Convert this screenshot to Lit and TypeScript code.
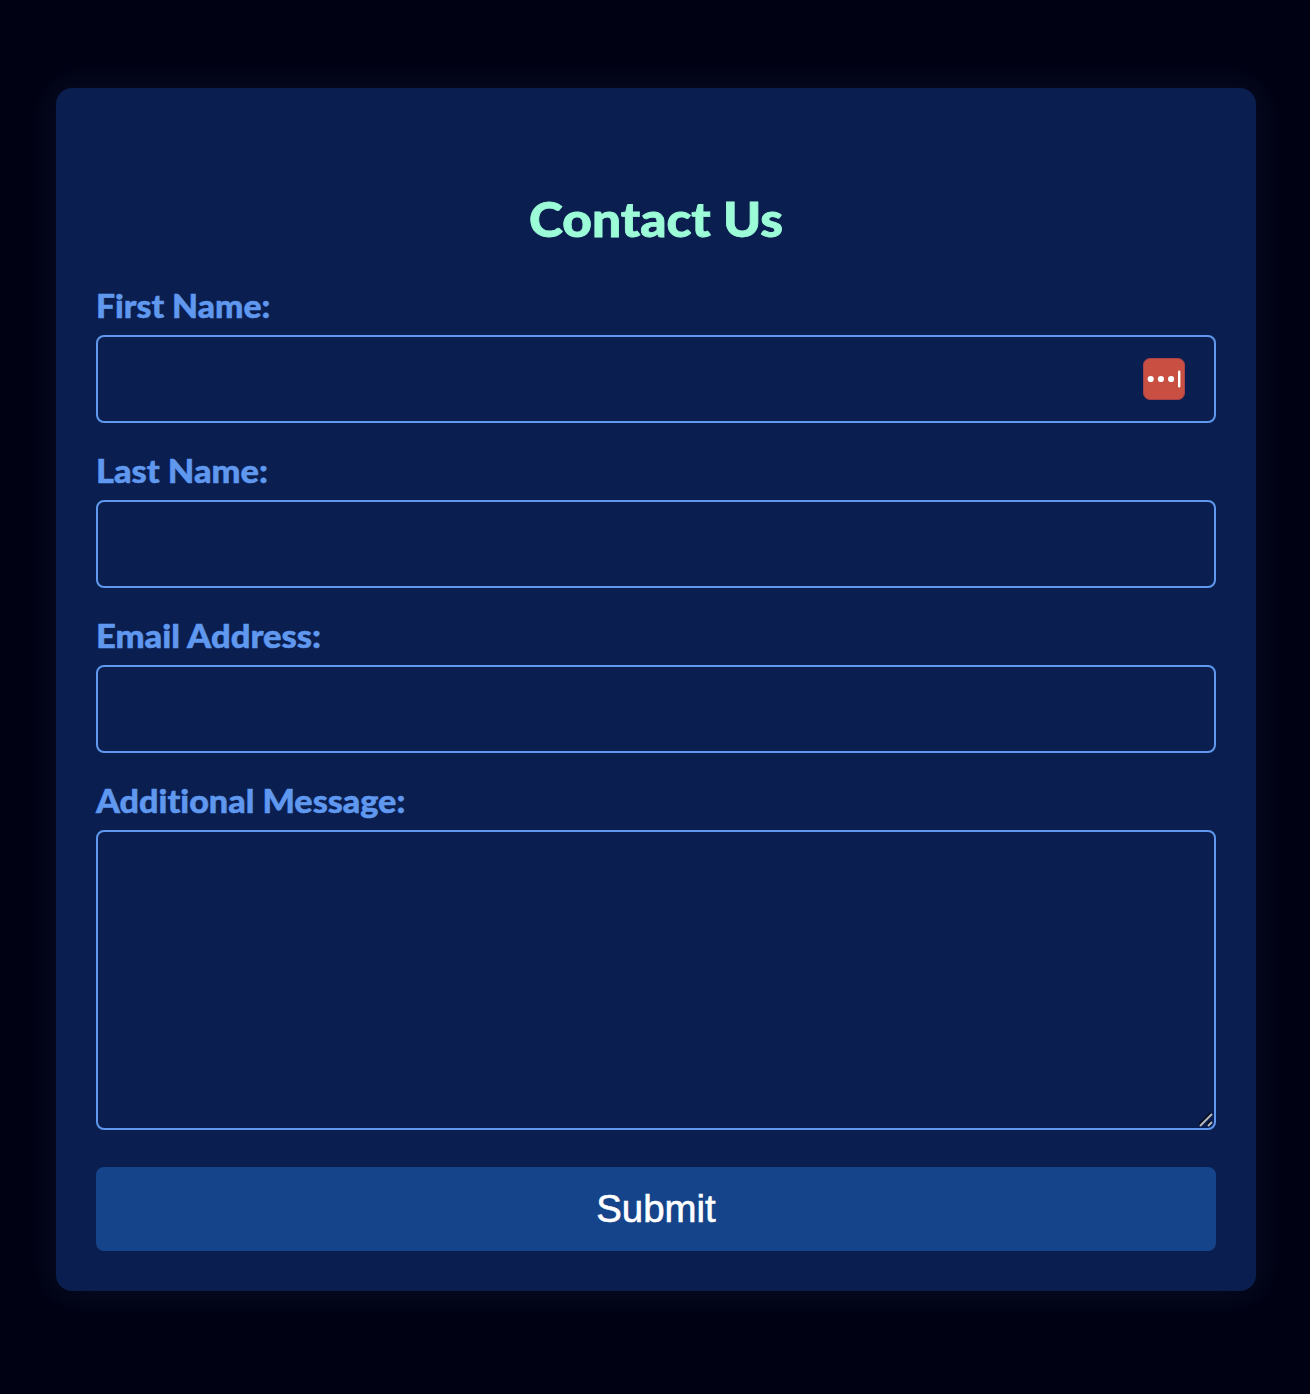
import { LitElement, html, css } from "lit";
import { customElement } from "lit/decorators.js";

@customElement("app-root")
export class AppRoot extends LitElement {
  static styles = css`
    :host {
      display: block;
      box-sizing: border-box;
      min-height: 1394px;
      padding: 88px 54px 103px 56px;
      background: #000214;
    }
    * { box-sizing: border-box; }
    .card {
      height: 1203px;
      padding: 95px 40px 40px;
      display: flex;
      flex-direction: column;
      background: #0a1f4f;
      border-radius: 16px;
      box-shadow: 0 0 34px rgba(100, 150, 200, 0.11);
    }
    h2 {
      margin: 0 0 28px;
      height: 72px;
      text-align: center;
      font: 900 48px/72px Lato, sans-serif;
      transform: scaleX(1.07);
      -webkit-text-stroke: 0.8px currentColor;
      color: #9dfcd8;
    }
    label {
      height: 45px;
      margin: 25px 0 7px;
      white-space: nowrap;
      align-self: flex-start;
      font: 900 32px/45px Lato, sans-serif;
      font-variant-ligatures: none;
      transform-origin: left;
      -webkit-text-stroke: 0.5px currentColor;
      color: #5f98ee;
    }
    .first { margin-top: 0; transform: scaleX(1.053); }
    .last { transform: scaleX(1.073); }
    .email { transform: scaleX(1.079); }
    .message { transform: scaleX(1.066); }
    .field { display: grid; height: 88px; flex: none; align-items: center; }
    input, textarea {
      display: block;
      width: 100%;
      height: 88px;
      margin: 0;
      padding: 20px;
      flex: none;
      border: 2px solid #5f98ee;
      border-radius: 8px;
      background: transparent;
      color: #fff;
      font: 32px "Liberation Sans", sans-serif;
      outline: none;
      grid-area: 1 / 1;
    }
    textarea { height: 300px; resize: none; }
    .area { display: grid; height: 300px; flex: none; }
    .grip { grid-area: 1 / 1; place-self: end; margin: 0 2px 2px 0; }
    .key { grid-area: 1 / 1; justify-self: end; margin-right: 31px; }
    svg { display: block; }
    button {
      height: 84px;
      flex: none;
      margin: 37px 0 0;
      padding: 0;
      border: 0;
      border-radius: 8px;
      background: #15448b;
      color: #fff;
      font: 38.4px/84px "Liberation Sans", sans-serif;
      -webkit-text-stroke: 0.6px currentColor;
    }
  `;

  render() {
    return html`
      <form class="card" @submit=${(e: Event) => e.preventDefault()}>
        <h2>Contact Us</h2>
        <label class="first" for="first">First Name:</label>
        <div class="field">
          <input id="first" type="text" />
          <svg class="key" width="42" height="42" viewBox="0 0 42 42">
            <rect x=".5" y=".5" width="41" height="41" rx="6.5" fill="#c94f43" stroke="#a94249" />
            <g fill="#fff">
              <circle cx="7.7" cy="21" r="3.1" />
              <circle cx="17.9" cy="21" r="3.1" />
              <circle cx="28.1" cy="21" r="3.1" />
              <rect x="35" y="12.5" width="2.4" height="17" rx="1.2" />
            </g>
          </svg>
        </div>
        <label class="last" for="last">Last Name:</label>
        <div class="field"><input id="last" type="text" /></div>
        <label class="email" for="email">Email Address:</label>
        <div class="field"><input id="email" type="email" /></div>
        <label class="message" for="message">Additional Message:</label>
        <div class="area">
          <textarea id="message"></textarea>
          <svg class="grip" width="16" height="16" viewBox="0 0 16 16" fill="none">
            <path d="M1 12.5 12.5 1M9 12.5l3.5-3.5" stroke="#050d22" stroke-width="2" />
            <path d="M2 14 14 2M10 14l4-4" stroke="#b4b6b5" stroke-width="2" />
          </svg>
        </div>
        <button type="submit">Submit</button>
      </form>
    `;
  }
}
